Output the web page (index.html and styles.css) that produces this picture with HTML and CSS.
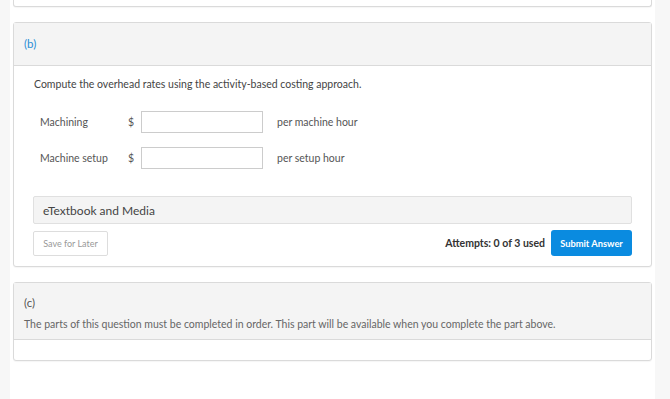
FILE: index.html
```html
<!DOCTYPE html>
<html lang="en">
<head>
  <meta charset="UTF-8" />
  <title>Question Parts</title>
  <link rel="stylesheet" href="styles.css">
</head>
<body>
  <div class="page">

    <!-- end of previous part -->
    <div class="card prev"></div>

    <!-- Part (b) -->
    <div class="card">
      <div class="card-head">
        <span class="part-label active">(b)</span>
      </div>
      <div class="card-body">
        <p class="prompt">Compute the overhead rates using the activity-based costing approach.</p>

        <div class="row">
          <label class="row-label" for="machining">Machining</label>
          <span class="dollar">$</span>
          <input type="text" id="machining" class="answer" />
          <span class="unit">per machine hour</span>
        </div>
        <div class="row">
          <label class="row-label" for="setup">Machine setup</label>
          <span class="dollar">$</span>
          <input type="text" id="setup" class="answer" />
          <span class="unit">per setup hour</span>
        </div>

        <div class="media">eTextbook and Media</div>

        <div class="actions">
          <button class="btn-save">Save for Later</button>
          <span class="attempts">Attempts: 0 of 3 used</span>
          <button class="btn-submit">Submit Answer</button>
        </div>
      </div>
    </div>

    <!-- Part (c) -->
    <div class="card">
      <div class="card-head tall">
        <span class="part-label">(c)</span>
        <p class="locked">The parts of this question must be completed in order. This part will be available when you complete the part above.</p>
      </div>
      <div class="card-body empty"></div>
    </div>

  </div>
</body>
</html>
```

FILE: styles.css
```css
body {
  margin: 0;
  background: #f7f7f7;
  font-family: Lato, "Open Sans", sans-serif;
  color: #333;
}
.page {
  margin-left: 10px;
  width: 639px;
  min-height: 399px;
  background: #fff;
  padding: 0 3px;
  display: flex;
  flex-direction: column;
  gap: 15px;
}
.card {
  border: 1px solid #dadada;
  border-radius: 3px;
  background: #fff;
  box-shadow: 0 1px 1px rgba(0,0,0,0.04);
}
.card.prev {
  height: 6px;
  border-top: none;
  border-radius: 0 0 3px 3px;
}
.card-head {
  background: #f4f4f4;
  border-bottom: 1px solid #dadada;
  height: 42px;
  padding: 0 10px;
  display: flex;
  align-items: center;
}
.card-head.tall {
  box-sizing: border-box;
  height: 57px;
  padding-top: 13px;
  flex-direction: column;
  align-items: flex-start;
}
.part-label {
  font-size: 11.5px;
  line-height: 14px;
  color: #555;
}
.part-label.active {
  color: #2a8fd6;
}
.locked {
  margin: 8px 0 0;
  font-size: 10.5px;
  line-height: 13px;
  color: #666;
}
.card-body {
  padding: 11px 19px 10px;
}
.card-body.empty {
  height: 20px;
  padding: 0;
}
.prompt {
  margin: 0 0 20px 1px;
  font-size: 10.5px;
  line-height: 14px;
  color: #444;
}
.row {
  display: flex;
  align-items: center;
  margin-left: 7px;
}
.row + .row {
  margin-top: 14px;
}
.row-label {
  width: 88px;
  font-size: 10.5px;
  color: #555;
}
.dollar {
  width: 13px;
  font-size: 10.5px;
  color: #555;
}
.answer {
  box-sizing: border-box;
  width: 122px;
  height: 22px;
  border: 1px solid #ccc;
  padding: 1px 4px;
  margin: 0 14px 0 0;
}
.unit {
  font-size: 10.5px;
  color: #555;
}
.media {
  box-sizing: border-box;
  margin-top: 27px;
  background: #f4f4f4;
  border: 1px solid #e0e0e0;
  border-radius: 2px;
  height: 28px;
  padding: 0 9px;
  display: flex;
  align-items: center;
  font-size: 12px;
  color: #444;
}
.actions {
  display: flex;
  align-items: center;
  margin-top: 6px;
}
.btn-save {
  font-family: inherit;
  font-size: 9px;
  color: #999;
  background: #fff;
  border: 1px solid #ddd;
  border-radius: 2px;
  width: 75px;
  height: 25px;
  padding: 0;
  cursor: pointer;
}
.attempts {
  margin-left: auto;
  margin-right: 6px;
  font-size: 10.5px;
  font-weight: bold;
  color: #333;
}
.btn-submit {
  font-family: inherit;
  font-size: 9.3px;
  font-weight: bold;
  color: #fff;
  background: #0a8be0;
  border: none;
  border-radius: 3px;
  width: 81px;
  height: 26px;
  padding: 0;
  cursor: pointer;
}
```
